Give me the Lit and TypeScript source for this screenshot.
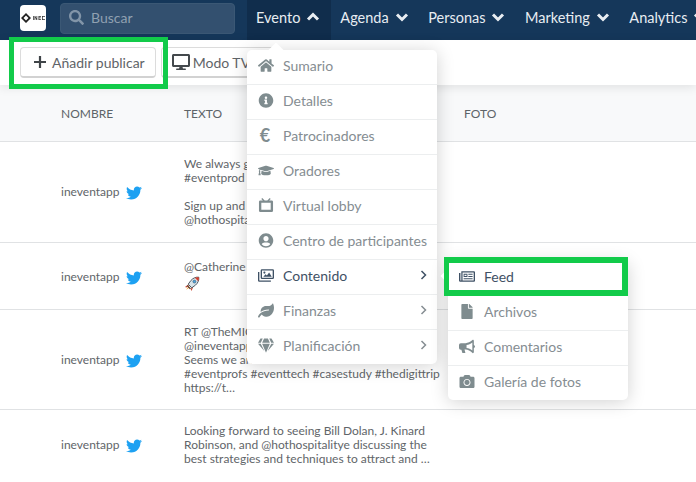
import { LitElement, html, css } from "lit";
import { customElement } from "lit/decorators.js";

const P: Record<string, [string, string]> = {
  twitter: ["0 0 512 512", "M459.37 151.716c.325 4.548.325 9.097.325 13.645 0 138.72-105.583 298.558-298.558 298.558-59.452 0-114.68-17.219-161.137-47.106 8.447.974 16.568 1.299 25.34 1.299 49.055 0 94.213-16.568 130.274-44.832-46.132-.975-84.792-31.188-98.112-72.772 6.498.974 12.995 1.624 19.818 1.624 9.421 0 18.843-1.3 27.614-3.573-48.081-9.747-84.143-51.98-84.143-102.985v-1.299c13.969 7.797 30.214 12.67 47.431 13.319-28.264-18.843-46.781-51.005-46.781-87.391 0-19.492 5.197-37.36 14.294-52.954 51.655 63.675 129.3 105.258 216.365 109.807-1.624-7.797-2.599-15.918-2.599-24.04 0-57.828 46.782-104.934 104.934-104.934 30.213 0 57.502 12.67 76.67 33.137 23.715-4.548 46.456-13.32 66.599-25.34-7.798 24.366-24.366 44.833-46.132 57.827 21.117-2.273 41.584-8.122 60.426-16.243-14.292 20.791-32.161 39.308-52.628 54.253z"],
  home: ["0 0 576 512", "M280.37 148.26L96 300.11V464a16 16 0 0 0 16 16l112.06-.29a16 16 0 0 0 15.92-16V368a16 16 0 0 1 16-16h64a16 16 0 0 1 16 16v95.64a16 16 0 0 0 16 16.05L464 480a16 16 0 0 0 16-16V300L295.67 148.26a12.19 12.19 0 0 0-15.3 0zM571.6 251.47L488 182.56V44.05a12 12 0 0 0-12-12h-56a12 12 0 0 0-12 12v72.61L318.47 43a48 48 0 0 0-61 0L4.34 251.47a12 12 0 0 0-1.6 16.9l25.5 31A12 12 0 0 0 45.15 301l235.22-193.74a12.19 12.19 0 0 1 15.3 0L530.9 301a12 12 0 0 0 16.9-1.6l25.5-31a12 12 0 0 0-1.7-16.93z"],
  info: ["0 0 512 512", "M256 8C119.043 8 8 119.083 8 256c0 136.997 111.043 248 248 248s248-111.003 248-248C504 119.083 392.957 8 256 8zm0 110c23.196 0 42 18.804 42 42s-18.804 42-42 42-42-18.804-42-42 18.804-42 42-42zm56 254c0 6.627-5.373 12-12 12h-88c-6.627 0-12-5.373-12-12v-24c0-6.627 5.373-12 12-12h12v-64h-12c-6.627 0-12-5.373-12-12v-24c0-6.627 5.373-12 12-12h64c6.627 0 12 5.373 12 12v100h12c6.627 0 12 5.373 12 12v24z"],
  user: ["0 0 496 512", "M248 8C111 8 0 119 0 256s111 248 248 248 248-111 248-248S385 8 248 8zm0 96c48.6 0 88 39.4 88 88s-39.4 88-88 88-88-39.4-88-88 39.4-88 88-88zm0 344c-58.7 0-111.3-26.6-146.5-68.2 18.8-35.4 55.6-59.8 98.5-59.8 2.4 0 4.8.4 7.1 1.1 13 4.2 26.6 6.9 40.9 6.9 14.3 0 28-2.7 40.9-6.9 2.3-.7 4.7-1.1 7.1-1.1 42.9 0 79.7 24.4 98.5 59.8C359.3 421.4 306.7 448 248 448z"],
  file: ["0 0 384 512", "M224 136V0H24C10.7 0 0 10.7 0 24v464c0 13.3 10.7 24 24 24h336c13.3 0 24-10.7 24-24V160H248c-13.2 0-24-10.8-24-24zm160-14.1v6.1H256V0h6.1c6.4 0 12.5 2.5 17 7l97.9 98c4.5 4.5 7 10.6 7 16.9z"],
  camera: ["0 0 512 512", "M512 144v288c0 26.5-21.5 48-48 48H48c-26.5 0-48-21.5-48-48V144c0-26.5 21.5-48 48-48h88l12.3-32.9c7-18.7 24.9-31.1 44.9-31.1h125.5c20 0 37.9 12.4 44.9 31.1L376 96h88c26.5 0 48 21.5 48 48zM376 288c0-66.2-53.8-120-120-120s-120 53.8-120 120 53.8 120 120 120 120-53.8 120-120zm-32 0c0 48.5-39.5 88-88 88s-88-39.5-88-88 39.5-88 88-88 88 39.5 88 88z"],
  search: ["0 0 512 512", "M505 442.7L405.3 343c-4.5-4.5-10.6-7-17-7H372c27.6-35.3 44-79.7 44-128C416 93.1 322.9 0 208 0S0 93.1 0 208s93.1 208 208 208c48.3 0 92.7-16.4 128-44v16.3c0 6.4 2.5 12.5 7 17l99.7 99.7c9.4 9.4 24.6 9.4 33.9 0l28.3-28.3c9.4-9.4 9.4-24.6.1-34zM208 336c-70.7 0-128-57.2-128-128 0-70.7 57.2-128 128-128 70.7 0 128 57.2 128 128 0 70.7-57.2 128-128 128z"],
  desktop: ["0 0 576 512", "M528 0H48C21.5 0 0 21.5 0 48v320c0 26.5 21.5 48 48 48h192l-16 48h-72c-13.3 0-24 10.7-24 24s10.7 24 24 24h272c13.3 0 24-10.7 24-24s-10.7-24-24-24h-72l-16-48h192c26.5 0 48-21.5 48-48V48c0-26.5-21.5-48-48-48zm-16 352H64V64h448v288z"],
  gem: ["0 0 576 512", "M485.5 0L576 160H474.9L405.7 0h79.8zm-128 0l69.2 160H149.3L218.5 0h139zm-267 0h79.8l-69.2 160H0L90.5 0zM0 192h100.7l123 251.7c1.5 3.1-2.7 5.9-5 3.3L0 192zm148.2 0h279.6l-137 318.2c-1 2.4-4.5 2.4-5.5 0L148.2 192zm204.1 251.7l123-251.7H576L357.3 446.9c-2.3 2.7-6.5-.1-5-3.2z"],
  leaf: ["0 0 576 512", "M546.2 9.7c-5.6-12.5-21.6-13-28.3-1.2C486.9 62.4 431.4 96 368 96h-80C182 96 96 182 96 288c0 7 .8 13.7 1.5 20.5C161.3 262.8 253.4 224 384 224c8.8 0 16 7.2 16 16s-7.2 16-16 16C132.6 256 26 410.1 2.4 468c-6.6 16.3 1.2 34.9 17.5 41.6 16.4 6.8 35-1.1 41.8-17.3 1.5-3.6 20.9-47.9 71.9-90.6 32.4 43.9 94 85.8 174.9 77.2C465.5 467.5 576 326.7 576 154.3c0-50.2-10.8-102.2-29.8-144.6z"],
  cap: ["0 0 640 512", "M622.34 153.2L343.4 67.5c-15.2-4.67-31.6-4.67-46.79 0L17.66 153.2c-23.54 7.23-23.54 38.36 0 45.59l48.63 14.94c-10.67 13.19-17.23 29.28-17.88 46.9C38.78 266.15 32 276.11 32 288c0 10.78 5.68 19.85 13.86 25.65L20.33 428.53C18.11 438.52 25.71 448 35.94 448h56.11c10.24 0 17.84-9.48 15.62-19.47L82.14 313.65C90.32 307.85 96 298.78 96 288c0-11.57-6.47-21.25-15.66-26.87.76-15.02 8.44-28.3 20.69-36.72L296.6 284.5c9.06 2.78 26.44 6.25 46.79 0l278.95-85.7c23.55-7.24 23.55-38.36 0-45.6zM352.79 315.09c-28.53 8.76-52.84 3.92-65.59 0l-145.02-44.55L128 384c0 35.35 85.96 64 192 64s192-28.65 192-64l-14.18-113.47-145.03 44.56z"],
  tv: ["0 0 16 16", "M4 0l2.6 2.6h2.8L12 0l1 1-1.7 1.6H14a1.5 1.5 0 0 1 1.5 1.5v9.4A1.5 1.5 0 0 1 14 15H2a1.5 1.5 0 0 1-1.5-1.5V4.100A1.500 1.500 0 0 1 2 2.600h2.700L3 1zM3 5v7.600h10V5z"],
  horn: ["0 0 18 16", "M15.500 0.500c.8 0 1.200.6 1.200 1.300v4.400c.7.300 1.300 1 1.300 1.800s-.6 1.500-1.300 1.800v4.400c0 .7-.4 1.300-1.200 1.300-3-2.600-5.500-3.800-8-4H6.200l1 3.800H3.800L2.700 11.700H2a2 2 0 0 1-2-2V6.300a2 2 0 0 1 2-2h5.500c2.500-.2 5-1.300 8-3.800zM15 3.500c-2 1.500-4.200 2.500-6.500 2.800v3.400c2.300.3 4.500 1.300 6.500 2.800z"],
};

const ic = (n: string, cls = "") => html`<svg class="ic ${cls}" viewBox=${P[n][0]}><path d=${P[n][1]}></path></svg>`;

const images = html`<svg class="ic" viewBox="0 0 18 16"><path d="M4.500 1h12A1.500 1.500 0 0 1 18 2.500v8a1.500 1.500 0 0 1-1.500 1.500h-12A1.500 1.500 0 0 1 3 10.500v-8A1.500 1.500 0 0 1 4.500 1zm0 1.500v8h12v-8zM6 9.500l2.500-3 1.500 1.500 2.500-3.500 3 5zM7.200 3.500a1.200 1.200 0 1 1 0 2.400 1.200 1.200 0 0 1 0-2.400zM1.500 4v9.500h13V15H1.500A1.500 1.500 0 0 1 0 13.500V4z"></path></svg>`;
const news = html`<svg class="ic" viewBox="0 0 18 14"><path d="M2.800 1h14A1.200 1.200 0 0 1 18 2.200v9.600a1.200 1.200 0 0 1-1.200 1.200H1.500A1.500 1.500 0 0 1 0 11.500V3h1.600v8.500h1V2A1 1 0 0 1 2.800 1zM4 2.500v9h12.500v-9zM5.200 4h4.300v3.500H5.200zm1 1v1.500h2.300V5zM10.500 4h4.800v1h-4.800zm0 2.500h4.800v1h-4.800zM5.200 9h10.100v1H5.200z"></path></svg>`;
const rocket = html`<svg class="rocket" viewBox="0 0 16 16">
  <path fill="#c9452f" d="M3 9.500 1 11l1.500.5L6 8zM9 11.500 7.500 15l-.8-1.800L9 10z"></path>
  <path fill="#d8e4ea" stroke="#3f4a54" stroke-width=".9" d="M14.800 1.200c-3-.4-6 1-8 3.400L4.200 8.200l3.600 3.600 3.600-2.600c2.400-2 3.800-5 3.400-8z"></path>
  <circle cx="10.400" cy="5.600" r="1.500" fill="#4aa3df" stroke="#3f4a54" stroke-width=".5"></circle>
  <path fill="#d6402f" d="M14.800 1.200c-1.400-.2-2.800 0-4 .6l3.400 3.400c.6-1.200.8-2.600.6-4z"></path>
  <path fill="#f39a1f" d="M4.400 10.500 2.200 13.800l3.300-2.200z"></path>
  <path fill="#5a3b2a" d="M3.600 9 7 12.400l-1.100.8-3.100-3.100z"></path>
</svg>`;

const chev = (d: string) => html`<svg class="chev" viewBox="0 0 14 10"><polyline points=${d}></polyline></svg>`;
const DOWN = "2,2.500 7,7.500 12,2.500";
const UP = "2,7.500 7,2.500 12,7.500";

const NAV = [
  ["Evento", true],
  ["Agenda", false],
  ["Personas", false],
  ["Marketing", false],
  ["Analytics", false],
] as const;

const MENU = [
  [ic("home"), "Sumario", false, false],
  [ic("info"), "Detalles", false, false],
  [html`<span class="euro">€</span>`, "Patrocinadores", false, false],
  [ic("cap"), "Oradores", false, false],
  [ic("tv"), "Virtual lobby", false, false],
  [ic("user"), "Centro de participantes", false, false],
  [images, "Contenido", true, true],
  [ic("leaf"), "Finanzas", false, true],
  [ic("gem"), "Planificación", false, true],
] as const;

const SUB = [
  [news, "Feed", true],
  [ic("file"), "Archivos", false],
  [ic("horn"), "Comentarios", false],
  [ic("camera"), "Galería de fotos", false],
] as const;

const ROWS = [
  { cls: "r1", text: "We always get\n#eventprod\n\nSign up and join\n@hothospitalitye" },
  { cls: "r2", text: "@Catherine", emoji: true },
  { cls: "r3", text: "RT @TheMICE\n@ineventapp\nSeems we are\n#eventprofs #eventtech #casestudy #thedigittrip\nhttps://t…" },
  { cls: "r4", text: "Looking forward to seeing Bill Dolan, J. Kinard\nRobinson, and @hothospitalitye discussing the\nbest strategies and techniques to attract and …" },
];

@customElement("app-root")
export class AppRoot extends LitElement {
  static styles = css`
    :host {
      display: block;
      position: relative;
      width: 696px;
      height: 482px;
      overflow: hidden;
      background: #fff;
      font-family: Lato, "Open Sans", sans-serif;
      color: #5d6468;
    }
    .ic { display: block; fill: currentColor; }
    .topbar {
      height: 40px;
      background: #15375a;
      display: flex;
      align-items: stretch;
      white-space: nowrap;
      overflow: hidden;
    }
    .logo {
      flex: none;
      width: 26px;
      height: 26px;
      margin: 5px 14px 0 20px;
      background: #fff;
      border-radius: 4px;
      display: flex;
      align-items: center;
      justify-content: center;
    }
    .logo svg { width: 25px; height: 10px; }
    .search {
      flex: none;
      width: 175px;
      height: 31px;
      margin: 3px 12px 0 0;
      box-sizing: border-box;
      padding: 0 0 3px 8px;
      display: flex;
      align-items: center;
      gap: 7px;
      background: #33506f;
      border: 1px solid #3b5875;
      border-radius: 4px;
      font-size: 14px;
      color: #90a0b1;
    }
    .search .ic { width: 15px; height: 15px; color: #8295a8; }
    .nav {
      display: flex;
      align-items: center;
      gap: 6px;
      padding: 0 9.75px 6px;
      font-size: 14.5px;
      color: #e8edf2;
    }
    .nav.on { background: #102d4c; padding-left: 9px; padding-right: 10.25px; }
    .chev { width: 14px; height: 10px; fill: none; stroke: currentColor; stroke-width: 3; }
    .toolbar {
      position: relative;
      z-index: 1;
      height: 45px;
      box-sizing: border-box;
      padding: 7px 0 0 20px;
      display: flex;
      gap: 5px;
      align-items: flex-start;
      background: #fff;
      box-shadow: 0 2px 10px rgba(0, 0, 0, 0.1);
    }
    .btn {
      height: 31px;
      box-sizing: border-box;
      display: flex;
      align-items: center;
      gap: 5px;
      padding: 0 10px 0 12px;
      background: #fff;
      border: 1px solid #dcdcdc;
      border-bottom: 2px solid #d2d2d2;
      border-radius: 4px;
      font-size: 14px;
      color: #5f6468;
    }
    .btn.tv { padding: 0 30px 0 10px; gap: 3px; }
    .btn .ic { width: 18px; height: 16px; color: #44494d; }
    .plus { width: 14px; height: 14px; fill: none; stroke: #3f4448; stroke-width: 2.200; }
    .head {
      height: 56px;
      box-sizing: border-box;
      background: #f8f9fa;
      display: flex;
      align-items: center;
      padding: 0 0 0 61px;
      font-size: 12px;
      color: #5d6468;
    }
    .head span:nth-child(1), .name { flex: none; width: 123px; }
    .head span:nth-child(2) { flex: none; width: 280px; }
    .row {
      display: flex;
      align-items: center;
      padding-left: 61px;
      border-top: 1px solid #e0e2e4;
      font-size: 12px;
      line-height: 14px;
      color: #5f6569;
    }
    .row:last-child { border-bottom: 1px solid #e0e2e4; }
    .r1 { padding-top: 15px; padding-bottom: 15px; }
    .r2 { padding-top: 17px; padding-bottom: 16px; }
    .r3 { padding-top: 15px; padding-bottom: 14px; }
    .r4 { padding-top: 14px; padding-bottom: 14px; }
    .name { display: flex; align-items: center; gap: 7px; font-size: 12px; }
    .tw { width: 16px; height: 16px; color: #1da1f2; margin-top: 2px; }
    .txt { white-space: pre-line; }
    .rocket { display: block; width: 16px; height: 16px; margin: 2px 0 1px; }
    .menu {
      position: absolute;
      z-index: 3;
      box-sizing: border-box;
      background: #fff;
      border-radius: 5px;
      box-shadow: 0 2px 18px rgba(0, 0, 0, 0.18);
    }
    .main { left: 247px; top: 50px; width: 190px; }
    .subm { left: 448px; top: 261px; width: 180px; }
    .main::before, .subm::before {
      content: "";
      position: absolute;
      width: 12px;
      height: 12px;
      background: #fff;
      transform: rotate(45deg);
    }
    .main::before { left: 23px; top: -5px; }
    .subm::before { left: -5px; top: 9px; }
    .item {
      position: relative;
      height: 35px;
      box-sizing: border-box;
      display: flex;
      align-items: center;
      font-size: 14px;
      color: #858d92;
      border-top: 1px solid #eceeef;
      padding: 0 8px 4px 0;
    }
    .item:first-child { border-top: 0; height: 34px; }
    .slot {
      flex: none;
      width: 36px;
      display: flex;
      justify-content: center;
      color: #7f8c8f;
      padding-left: 2px;
      box-sizing: border-box;
    }
    .subm .slot { width: 36px; padding-left: 1px; }
    .slot .ic { width: 16px; height: 15px; }
    .euro { font-size: 18px; font-weight: 700; line-height: 15px; margin-right: 2px; }
    .lab { flex: 1; }
    .item.on { color: #3f5165; }
    .item.on .slot { color: #3f5165; }
    .go { width: 7px; height: 10px; fill: none; stroke: currentColor; stroke-width: 1.500; margin-right: 2px; }
    .frame {
      position: absolute;
      z-index: 4;
      box-sizing: border-box;
      border: 5px solid #12cb4a;
      pointer-events: none;
    }
    .f1 { left: 9px; top: 37px; width: 159px; height: 52px; }
    .f2 { left: 444px; top: 257px; width: 184px; height: 39px; border-width: 6px 6px 6px 5px; }
  `;

  render() {
    return html`
      <div class="topbar">
        <div class="logo">
          <svg viewBox="0 0 50 20">
            <path fill="#222" d="M10 0l10 10-10 10L0 10zM10 5l-5 5 5 5 5-5z"></path>
            <path fill="#333" d="M24 6h1.500v8H24zM27 6h1.500l2.500 5V6h1.500v8H31l-2.500-5v5H27zM35 6h5v1.500h-3.500V9h3v1.500h-3v2H40V14h-5zM42 6h6v1.500h-4.500v5H48V14h-6z"></path>
          </svg>
        </div>
        <div class="search">${ic("search")}<span>Buscar</span></div>
        ${NAV.map(([t, on]) => html`<div class="nav ${on ? "on" : ""}">${t}${chev(on ? UP : DOWN)}</div>`)}
      </div>
      <div class="toolbar">
        <div class="btn">
          <svg class="plus" viewBox="0 0 14 14"><path d="M7 1v12M1 7h12"></path></svg>
          Añadir publicar
        </div>
        <div class="btn tv">${ic("desktop")}Modo TV</div>
      </div>
      <div class="head"><span>NOMBRE</span><span>TEXTO</span><span>FOTO</span></div>
      ${ROWS.map(
        (r) => html`<div class="row ${r.cls}">
          <div class="name">ineventapp ${ic("twitter", "tw")}</div>
          <div class="txt">${r.text}${r.emoji ? rocket : ""}</div>
        </div>`
      )}
      <div class="menu main">
        ${MENU.map(
          ([i, t, on, more]) => html`<div class="item ${on ? "on" : ""}">
            <span class="slot">${i}</span><span class="lab">${t}</span>
            ${more ? html`<svg class="go" viewBox="0 0 7 10"><polyline points="1.500,1 5.500,5 1.500,9"></polyline></svg>` : ""}
          </div>`
        )}
      </div>
      <div class="menu subm">
        ${SUB.map(
          ([i, t, on]) => html`<div class="item ${on ? "on" : ""}"><span class="slot">${i}</span><span class="lab">${t}</span></div>`
        )}
      </div>
      <div class="frame f1"></div>
      <div class="frame f2"></div>
    `;
  }
}
